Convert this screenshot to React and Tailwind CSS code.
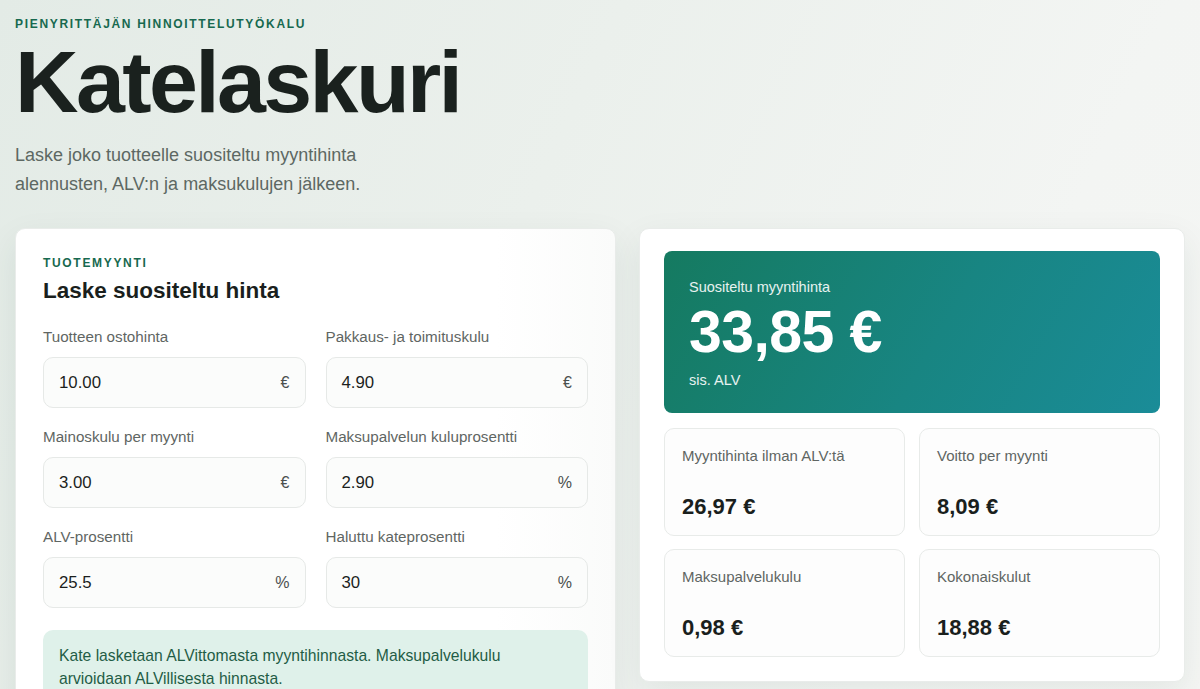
import React from "react";

const fields = [
  { label: "Tuotteen ostohinta", value: "10.00", unit: "€" },
  { label: "Pakkaus- ja toimituskulu", value: "4.90", unit: "€" },
  { label: "Mainoskulu per myynti", value: "3.00", unit: "€" },
  { label: "Maksupalvelun kuluprosentti", value: "2.90", unit: "%" },
  { label: "ALV-prosentti", value: "25.5", unit: "%" },
  { label: "Haluttu kateprosentti", value: "30", unit: "%" },
];

const stats = [
  { label: "Myyntihinta ilman ALV:tä", value: "26,97 €" },
  { label: "Voitto per myynti", value: "8,09 €" },
  { label: "Maksupalvelukulu", value: "0,98 €" },
  { label: "Kokonaiskulut", value: "18,88 €" },
];

function Field({ label, value, unit }) {
  return (
    <div className="flex flex-col">
      <label className="text-[15.2px] leading-5 text-[#5f6663] mb-[10px]">{label}</label>
      <div className="h-[51px] rounded-[10px] border border-[#e6e9e7] bg-[#fbfcfb] flex items-center justify-between pl-[15px] pr-[15px]">
        <span className="text-[16.8px] text-[#1b1f1d]">{value}</span>
        <span className="text-[16px] text-[#4b504e]">{unit}</span>
      </div>
    </div>
  );
}

export default function App() {
  return (
    <div
      className="min-h-screen bg-[linear-gradient(115deg,#e3ebe6_0%,#ebf0ec_40%,#f3f5f3_75%,#f5f6f4_100%)] text-[#1b1f1d]"
      style={{ fontFamily: '"Liberation Sans", Arial, sans-serif' }}
    >
      <div className="max-w-[1170px] mx-auto pt-4 pb-10">
        <div className="text-[12px] leading-4 font-bold tracking-[0.14em] text-[#17694f]">
          PIENYRITTÄJÄN HINNOITTELUTYÖKALU
        </div>
        <h1 className="mt-[6px] text-[88px] leading-none font-bold tracking-[-0.03em] text-[#1a211e]">
          Katelaskuri
        </h1>
        <p className="mt-[15px] max-w-[400px] text-[18px] leading-[29px] text-[#5d6863]">
          Laske joko tuotteelle suositeltu myyntihinta alennusten, ALV:n ja maksukulujen jälkeen.
        </p>

        <div className="mt-[29px] grid grid-cols-[601px_1fr] gap-[23px] items-start">
          <div className="rounded-[10px] bg-[linear-gradient(90deg,#ffffff_0%,#ffffff_80%,#fafbfa_100%)] border border-[#e9ecea] shadow-[0_12px_34px_rgba(30,60,45,0.08)] pt-[26px] px-[27px] pb-8">
            <div className="text-[12px] leading-4 font-bold tracking-[0.14em] text-[#17694f]">TUOTEMYYNTI</div>
            <h2 className="mt-[6px] text-[22.5px] leading-7 font-bold text-[#1a1f1d]">Laske suositeltu hinta</h2>
            <div className="mt-[22px] grid grid-cols-2 gap-x-5 gap-y-[19px]">
              {fields.map((f) => (
                <Field key={f.label} {...f} />
              ))}
            </div>
            <div className="mt-[22px] rounded-[10px] bg-[#dff1ea] px-4 pt-[14px] pb-4 text-[15.7px] leading-[23px] text-[#1f5d46]">
              Kate lasketaan ALVittomasta myyntihinnasta. Maksupalvelukulu arvioidaan ALVillisesta hinnasta.
            </div>
          </div>

          <div className="rounded-[10px] bg-white border border-[#e9ecea] shadow-[0_12px_34px_rgba(30,60,45,0.08)] px-6 pt-[22px] pb-6">
            <div className="rounded-[8px] bg-[linear-gradient(120deg,#157a60_0%,#188582_55%,#1a8c98_100%)] px-[25px] pt-[26px] pb-[23px] text-white">
              <div className="text-[14.5px] leading-5 text-white/90">Suositeltu myyntihinta</div>
              <div className="mt-[6px] text-[59px] leading-none font-bold tracking-[-0.01em]">33,85 €</div>
              <div className="mt-[8px] text-[14.5px] leading-5 text-white/90">sis. ALV</div>
            </div>
            <div className="mt-[15px] grid grid-cols-2 gap-x-[14px] gap-y-[13px]">
              {stats.map((s) => (
                <div
                  key={s.label}
                  className="h-[108px] rounded-[10px] border border-[#e8ebe9] bg-[#fdfdfd] px-[17px] pt-[17px] pb-[14px] flex flex-col justify-between"
                >
                  <div className="text-[15px] leading-5 text-[#5f6663]">{s.label}</div>
                  <div className="text-[22px] leading-7 font-bold text-[#1a1f1d]">{s.value}</div>
                </div>
              ))}
            </div>
          </div>
        </div>
      </div>
    </div>
  );
}
